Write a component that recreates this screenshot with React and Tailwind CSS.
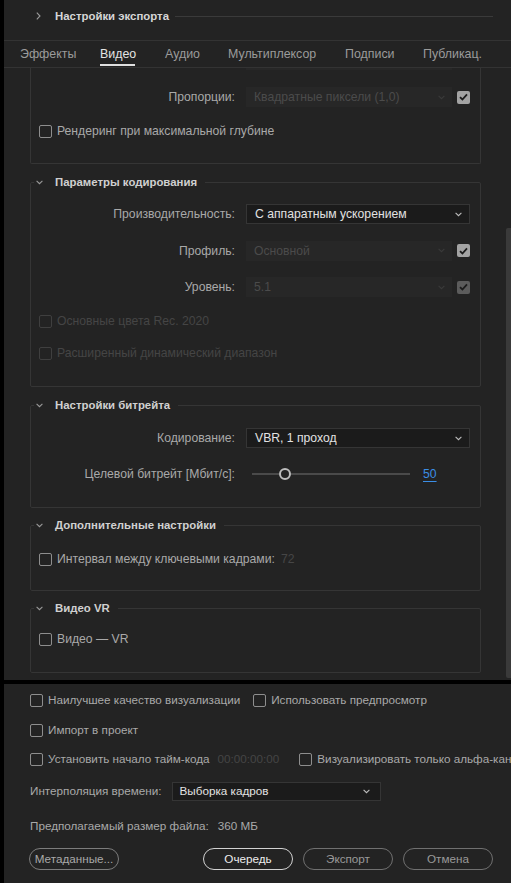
import React from 'react';

const Chevron = ({ className = '' }) => (
  <svg width="7" height="5" viewBox="0 0 7 5" className={className}>
    <path d="M0.6 0.8 L3.5 3.7 L6.4 0.8" fill="none" stroke="currentColor" strokeWidth="1.1" />
  </svg>
);

const Check = () => (
  <svg width="9" height="8" viewBox="0 0 9 8">
    <path d="M1 4.2 L3.4 6.5 L8 1.3" fill="none" stroke="#1c1c1c" strokeWidth="1.8" />
  </svg>
);

function Box({ checked, disabled, dim }) {
  if (checked) {
    return (
      <span
        className={`w-[13px] h-[13px] rounded-[2px] flex items-center justify-center shrink-0 ${
          dim ? 'bg-[#5c5c5c]' : 'bg-[#a3a3a3]'
        }`}
      >
        <Check />
      </span>
    );
  }
  return (
    <span
      className={`w-[13px] h-[13px] rounded-[2px] border-[1.5px] shrink-0 ${
        disabled ? 'border-[#3f3f3f]' : 'border-[#8e8e8e]'
      }`}
    />
  );
}

function CheckRow({ label, disabled, className = '', children }) {
  return (
    <div className={`flex items-center whitespace-nowrap ${className}`}>
      <Box disabled={disabled} />
      <span className={`ml-[5px] ${disabled ? 'text-[#454545]' : 'text-[#a9a9a9]'}`}>{label}</span>
      {children}
    </div>
  );
}

function Select({ value, disabled, width, dim, checkbox }) {
  return (
    <div className="flex items-center">
      <div
        className={`h-[20px] flex items-center justify-between pl-[8px] pr-[7px] ${width} ${
          disabled ? 'bg-[#272727] text-[#4b4b4b]' : 'bg-[#1b1b1b] border border-[#353535] text-[#e2e2e2]'
        }`}
      >
        <span>{value}</span>
        <Chevron className={disabled ? 'text-[#3a3a3a]' : 'text-[#bdbdbd]'} />
      </div>
      {checkbox && (
        <span className="ml-[5px]">
          <Box checked dim={dim} />
        </span>
      )}
    </div>
  );
}

function FormRow({ label, className = '', children }) {
  return (
    <div className={`flex items-center ${className}`}>
      <span className="w-[204px] text-right text-[#a9a9a9]">{label}</span>
      <div className="ml-[11px]">{children}</div>
    </div>
  );
}

function Group({ title, className = '', children }) {
  return (
    <fieldset className={`ml-[26px] w-[451px] border border-[#353535] rounded-[2px] ${className}`}>
      <legend className="ml-[3px] px-[2px]">
        <span className="flex items-center h-[16px] pr-[6px]">
          <Chevron className="text-[#9a9a9a]" />
          <span className="ml-[12px] font-bold text-[11.4px] text-[#d0d0d0]">{title}</span>
        </span>
      </legend>
      {children}
    </fieldset>
  );
}

const tabs = [
  ['Эффекты', 'w-[80px]'],
  ['Видео', 'w-[65px]'],
  ['Аудио', 'w-[63px]'],
  ['Мультиплексор', 'w-[117px]'],
  ['Подписи', 'w-[78px]'],
  ['Публикац.', 'w-[80px]'],
];

function Pill({ children, tone }) {
  const styles = {
    meta: 'border-[#7c7c7c] text-[#a9a9a9]',
    main: 'border-[#d2d2d2] text-[#ededed]',
    soft: 'border-[#707070] text-[#9a9a9a]',
  };
  return (
    <button className={`w-[90px] h-[22px] rounded-full border ${styles[tone]} flex items-center justify-center`}>
      {children}
    </button>
  );
}

export default function App() {
  return (
    <div className="w-[511px] h-[883px] overflow-hidden bg-[#232323] border-l-[4px] border-black flex flex-col font-['Liberation_Sans',Arial,sans-serif] text-[12.2px] leading-[16px]">
      {/* header */}
      <div className="h-[40px] pt-[8px] flex items-start pl-[32px] pr-[18px] shrink-0">
        <div className="h-[16px] flex items-center w-full">
          <svg width="5" height="8" viewBox="0 0 5 8" className="text-[#9a9a9a]">
            <path d="M0.8 0.6 L4 4 L0.8 7.4" fill="none" stroke="currentColor" strokeWidth="1.1" />
          </svg>
          <span className="ml-[14px] font-bold text-[11.4px] text-[#d6d6d6]">Настройки экспорта</span>
          <div className="ml-[6px] flex-1 h-px bg-[#3a3a3a]" />
        </div>
      </div>

      {/* tabs */}
      <div className="h-[28px] border-y border-[#333333] flex items-stretch pl-[16px] shrink-0 text-[12.4px]">
        {tabs.map(([t, w], i) => (
          <div key={t} className={`${w} relative flex items-center shrink-0`}>
            <span className={i === 1 ? 'text-[#e4e4e4]' : 'text-[#9b9b9b]'}>{t}</span>
            {i === 1 && <span className="absolute left-0 bottom-[1px] w-[35px] h-[2px] bg-[#e0e0e0]" />}
          </div>
        ))}
      </div>

      {/* scroll area */}
      <div className="h-[612px] flex shrink-0">
        <div className="w-[486px] shrink-0">
          {/* cut-off box */}
          <div className="ml-[26px] w-[451px] h-[96px] border-x border-b border-[#353535] rounded-b-[2px]">
            <div className="ml-[215px] w-[206px] h-[2px] bg-[#272727]" />
            <div className="pt-[9px]">
              <FormRow label="Пропорции:" className="h-[36px]">
                <Select value="Квадратные пиксели (1,0)" disabled width="w-[206px]" checkbox />
              </FormRow>
              <CheckRow label="Рендеринг при максимальной глубине" className="h-[32px] pl-[8px]" />
            </div>
          </div>

          <Group title="Параметры кодирования" className="mt-[10px] h-[213px]">
            <div className="pt-[6px]">
              <FormRow label="Производительность:" className="h-[36px]">
                <Select value="С аппаратным ускорением" width="w-[224px]" />
              </FormRow>
              <FormRow label="Профиль:" className="h-[37px]">
                <Select value="Основной" disabled width="w-[206px]" checkbox />
              </FormRow>
              <FormRow label="Уровень:" className="h-[36px]">
                <Select value="5.1" disabled width="w-[206px]" checkbox dim />
              </FormRow>
              <CheckRow label="Основные цвета Rec. 2020" disabled className="h-[32px] pl-[8px]" />
              <CheckRow label="Расширенный динамический диапазон" disabled className="h-[32px] pl-[8px]" />
            </div>
          </Group>

          <Group title="Настройки битрейта" className="mt-[10px] h-[111px]">
            <div className="pt-[7px]">
              <FormRow label="Кодирование:" className="h-[36px]">
                <Select value="VBR, 1 проход" width="w-[224px]" />
              </FormRow>
              <FormRow label="Целевой битрейт [Мбит/с]:" className="h-[36px]">
                <div className="flex items-center">
                  <div className="ml-[6px] w-[158px] h-[12px] flex items-center">
                    <div className="w-[27px] h-[2px] bg-[#4a4a4a]" />
                    <span className="w-[12px] h-[12px] rounded-full border-2 border-[#bdbdbd] bg-[#232323] shrink-0" />
                    <div className="flex-1 h-[2px] bg-[#4a4a4a]" />
                  </div>
                  <span className="ml-[13px] text-[#3b8ee6] underline underline-offset-[3px]">50</span>
                </div>
              </FormRow>
            </div>
          </Group>

          <Group title="Дополнительные настройки" className="mt-[9px] h-[74px]">
            <div className="pt-[10px]">
              <CheckRow label="Интервал между ключевыми кадрами:" className="h-[32px] pl-[8px]">
                <span className="ml-[6px] text-[#464646]">72</span>
              </CheckRow>
            </div>
          </Group>

          <Group title="Видео VR" className="mt-[9px] h-[73px]">
            <div className="pt-[7px]">
              <CheckRow label="Видео — VR" className="h-[32px] pl-[8px]" />
            </div>
          </Group>
        </div>
        {/* scrollbar */}
        <div className="flex-1 flex justify-end">
          <div className="w-[5px] mt-[160px] h-[450px] bg-[#3a3a3a] rounded-l-[2px]" />
        </div>
      </div>

      <div className="h-[4px] bg-black shrink-0" />

      {/* bottom */}
      <div className="flex-1 pl-[26px] pt-[1px] text-[#a9a9a9] text-[11.7px]">
        <div className="h-[30px] flex items-center">
          <CheckRow label="Наилучшее качество визуализации" />
          <CheckRow label="Использовать предпросмотр" className="ml-[13px]" />
        </div>
        <div className="h-[30px] flex items-center">
          <CheckRow label="Импорт в проект" />
        </div>
        <div className="h-[28px] flex items-center whitespace-nowrap">
          <CheckRow label="Установить начало тайм-кода" />
          <span className="ml-[8px] text-[#454545]">00:00:00:00</span>
          <CheckRow label="Визуализировать только альфа-канал" className="ml-[20px]" />
        </div>
        <div className="h-[36px] flex items-center">
          <span>Интерполяция времени:</span>
          <div className="ml-[10px] w-[209px] h-[19px] bg-[#1b1b1b] border border-[#353535] flex items-center justify-between pl-[7px] pr-[10px] text-[#e2e2e2]">
            <span>Выборка кадров</span>
            <Chevron className="text-[#bdbdbd]" />
          </div>
        </div>
        <div className="h-[34px] flex items-center">
          <span>Предполагаемый размер файла:</span>
          <span className="ml-[9px]">360 МБ</span>
        </div>
        <div className="h-[32px] flex items-center -ml-[1px]">
          <Pill tone="meta">Метаданные...</Pill>
          <div className="ml-[84px] flex gap-[10px]">
            <Pill tone="main">Очередь</Pill>
            <Pill tone="soft">Экспорт</Pill>
            <Pill tone="soft">Отмена</Pill>
          </div>
        </div>
      </div>
    </div>
  );
}
